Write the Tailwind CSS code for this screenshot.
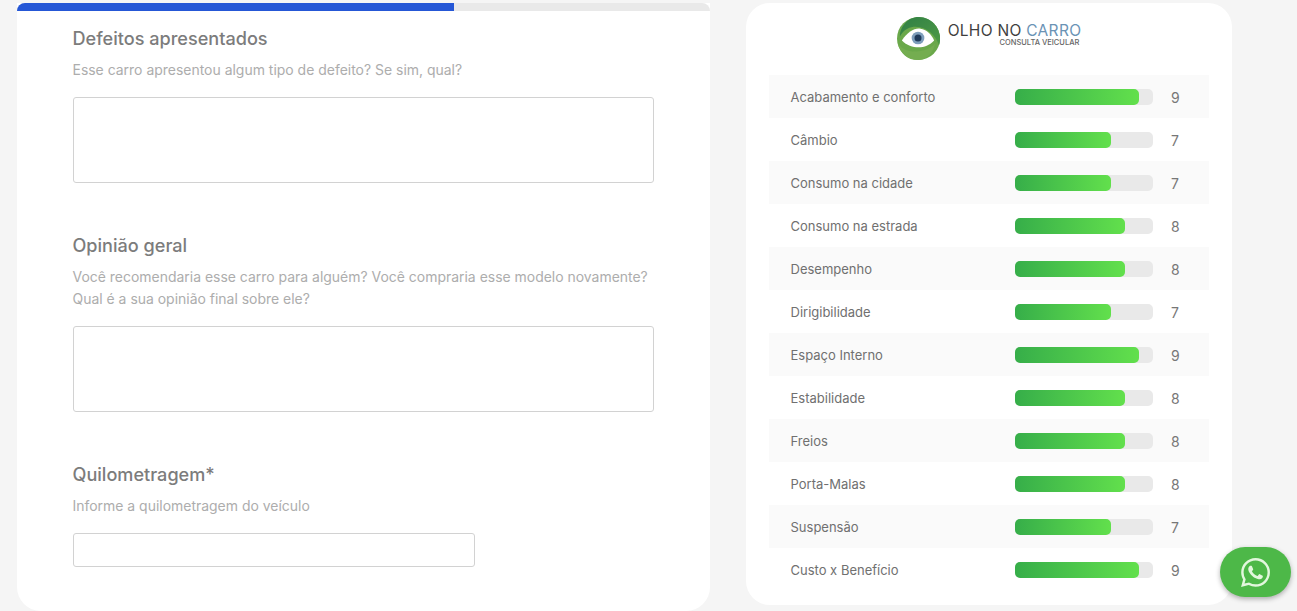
<!DOCTYPE html>
<html lang="pt-BR">
<head>
    <meta charset="UTF-8">
    <title>Olho no Carro</title>
    <script src="https://cdn.jsdelivr.net/npm/@tailwindcss/browser@4"></script>
</head>
<body class="bg-[#f5f5f5] h-[611px] overflow-hidden font-['Inter',sans-serif]">
    <div class="flex items-start pl-[17px] pt-[3px] gap-[36px]">
        <!-- Form -->
        <main class="w-[693px] h-[608px] bg-white rounded-b-[24px] shrink-0">
            <div class="h-[8px] bg-[#e9e9e9] rounded-t-[10px] overflow-hidden">
                <div class="h-full w-[437px] bg-[#2557d6]"></div>
            </div>
            <div class="pl-[55.500px] pr-[56px]">
                <section class="pt-[15px]">
                    <h2 class="text-[18.100px] leading-[24px] font-medium text-[#7c7c7c]">Defeitos apresentados</h2>
                    <p class="mt-[9px] text-[13.960px] leading-[22px] text-[#adadad]">Esse carro apresentou algum tipo de defeito? Se sim, qual?</p>
                    <textarea class="block mt-[16px] ml-[0.500px] w-[581px] h-[86px] border border-[#d2d2d2] rounded-[3px] resize-none"></textarea>
                </section>
                <section class="pt-[50px]">
                    <h2 class="text-[18.100px] leading-[24px] font-medium text-[#7c7c7c]">Opinião geral</h2>
                    <p class="mt-[9px] text-[13.960px] leading-[22px] text-[#adadad]">Você recomendaria esse carro para alguém? Você compraria esse modelo novamente?<br>Qual é a sua opinião final sobre ele?</p>
                    <textarea class="block mt-[16px] ml-[0.500px] w-[581px] h-[86px] border border-[#d2d2d2] rounded-[3px] resize-none"></textarea>
                </section>
                <section class="pt-[50px]">
                    <h2 class="text-[18.100px] leading-[24px] font-medium text-[#7c7c7c]">Quilometragem*</h2>
                    <p class="mt-[9px] text-[13.960px] leading-[22px] text-[#adadad]">Informe a quilometragem do veículo</p>
                    <input type="text" class="block mt-[16px] ml-[0.500px] w-[402px] h-[34px] border border-[#d2d2d2] rounded-[3px]">
                </section>
            </div>
        </main>

        <!-- Notas -->
        <aside class="w-[486px] h-[602px] bg-white rounded-[24px] px-[23px] shrink-0">
            <div class="h-[72px] flex items-start justify-center pt-[14px]">
                <svg class="w-[43px] h-[43px] mr-[8px]" viewBox="0 0 44 44">
                    <defs>
                        <linearGradient id="ringTop" x1="0" y1="0" x2="1" y2="1">
                            <stop offset="0" stop-color="#2f7f45"/>
                            <stop offset="1" stop-color="#4f9a45"/>
                        </linearGradient>
                    </defs>
                    <circle cx="22" cy="22" r="22" fill="#6aa84a"/>
                    <path d="M22 0a22 22 0 0 1 21 29C40 19 30 9 17 10 11 11 6 14 3 20 3 9 12 0 22 0z" fill="url(#ringTop)"/>
                    <path d="M1 27c5 7 13 9 21 8 8-1 14-4 17-8-2 10-9 17-18 17C11 44 3 37 1 27z" fill="#74ad50"/>
                    <path d="M5 24C11 15 18 11 24 12c6 1 11 5 14 12-5 5-10 7-16 7S10 29 5 24z" fill="#ffffff"/>
                    <circle cx="21.500" cy="21.500" r="6.500" fill="#7d9dbb"/>
                    <circle cx="21.500" cy="21.500" r="3.600" fill="#1f3a5a"/>
                </svg>
                <div class="pt-[7px]">
                    <div class="text-[15.500px] leading-[14px] tracking-[0.3px] text-[#3f3f3f] whitespace-nowrap">OLHO NO <span class="text-[#6b93b5]">CARRO</span></div>
                    <div class="mt-[0.500px] text-[7.500px] leading-[8px] font-medium text-[#666666] text-right pr-[2px] whitespace-nowrap">CONSULTA VEICULAR</div>
                </div>
            </div>

            <div class="flex items-center h-[43px] pt-[1px] bg-[#fafafa]">
                <span class="w-[246px] pl-[21.500px] pt-[2px] text-[13px] text-[#707070]">Acabamento e conforto</span>
                <div class="w-[138px] h-[16px] rounded-[5px] bg-[#e9e9e9]"><div class="h-full w-[124px] rounded-[5px] bg-gradient-to-r from-[#36ae49] to-[#62e04c]"></div></div>
                <span class="ml-[18px] text-[14px] text-[#777777]">9</span>
            </div>
            <div class="flex items-center h-[43px] pt-[1px]">
                <span class="w-[246px] pl-[21.500px] pt-[2px] text-[13px] text-[#707070]">Câmbio</span>
                <div class="w-[138px] h-[16px] rounded-[5px] bg-[#e9e9e9]"><div class="h-full w-[96px] rounded-[5px] bg-gradient-to-r from-[#36ae49] to-[#62e04c]"></div></div>
                <span class="ml-[18px] text-[14px] text-[#777777]">7</span>
            </div>
            <div class="flex items-center h-[43px] pt-[1px] bg-[#fafafa]">
                <span class="w-[246px] pl-[21.500px] pt-[2px] text-[13px] text-[#707070]">Consumo na cidade</span>
                <div class="w-[138px] h-[16px] rounded-[5px] bg-[#e9e9e9]"><div class="h-full w-[96px] rounded-[5px] bg-gradient-to-r from-[#36ae49] to-[#62e04c]"></div></div>
                <span class="ml-[18px] text-[14px] text-[#777777]">7</span>
            </div>
            <div class="flex items-center h-[43px] pt-[1px]">
                <span class="w-[246px] pl-[21.500px] pt-[2px] text-[13px] text-[#707070]">Consumo na estrada</span>
                <div class="w-[138px] h-[16px] rounded-[5px] bg-[#e9e9e9]"><div class="h-full w-[110px] rounded-[5px] bg-gradient-to-r from-[#36ae49] to-[#62e04c]"></div></div>
                <span class="ml-[18px] text-[14px] text-[#777777]">8</span>
            </div>
            <div class="flex items-center h-[43px] pt-[1px] bg-[#fafafa]">
                <span class="w-[246px] pl-[21.500px] pt-[2px] text-[13px] text-[#707070]">Desempenho</span>
                <div class="w-[138px] h-[16px] rounded-[5px] bg-[#e9e9e9]"><div class="h-full w-[110px] rounded-[5px] bg-gradient-to-r from-[#36ae49] to-[#62e04c]"></div></div>
                <span class="ml-[18px] text-[14px] text-[#777777]">8</span>
            </div>
            <div class="flex items-center h-[43px] pt-[1px]">
                <span class="w-[246px] pl-[21.500px] pt-[2px] text-[13px] text-[#707070]">Dirigibilidade</span>
                <div class="w-[138px] h-[16px] rounded-[5px] bg-[#e9e9e9]"><div class="h-full w-[96px] rounded-[5px] bg-gradient-to-r from-[#36ae49] to-[#62e04c]"></div></div>
                <span class="ml-[18px] text-[14px] text-[#777777]">7</span>
            </div>
            <div class="flex items-center h-[43px] pt-[1px] bg-[#fafafa]">
                <span class="w-[246px] pl-[21.500px] pt-[2px] text-[13px] text-[#707070]">Espaço Interno</span>
                <div class="w-[138px] h-[16px] rounded-[5px] bg-[#e9e9e9]"><div class="h-full w-[124px] rounded-[5px] bg-gradient-to-r from-[#36ae49] to-[#62e04c]"></div></div>
                <span class="ml-[18px] text-[14px] text-[#777777]">9</span>
            </div>
            <div class="flex items-center h-[43px] pt-[1px]">
                <span class="w-[246px] pl-[21.500px] pt-[2px] text-[13px] text-[#707070]">Estabilidade</span>
                <div class="w-[138px] h-[16px] rounded-[5px] bg-[#e9e9e9]"><div class="h-full w-[110px] rounded-[5px] bg-gradient-to-r from-[#36ae49] to-[#62e04c]"></div></div>
                <span class="ml-[18px] text-[14px] text-[#777777]">8</span>
            </div>
            <div class="flex items-center h-[43px] pt-[1px] bg-[#fafafa]">
                <span class="w-[246px] pl-[21.500px] pt-[2px] text-[13px] text-[#707070]">Freios</span>
                <div class="w-[138px] h-[16px] rounded-[5px] bg-[#e9e9e9]"><div class="h-full w-[110px] rounded-[5px] bg-gradient-to-r from-[#36ae49] to-[#62e04c]"></div></div>
                <span class="ml-[18px] text-[14px] text-[#777777]">8</span>
            </div>
            <div class="flex items-center h-[43px] pt-[1px]">
                <span class="w-[246px] pl-[21.500px] pt-[2px] text-[13px] text-[#707070]">Porta-Malas</span>
                <div class="w-[138px] h-[16px] rounded-[5px] bg-[#e9e9e9]"><div class="h-full w-[110px] rounded-[5px] bg-gradient-to-r from-[#36ae49] to-[#62e04c]"></div></div>
                <span class="ml-[18px] text-[14px] text-[#777777]">8</span>
            </div>
            <div class="flex items-center h-[43px] pt-[1px] bg-[#fafafa]">
                <span class="w-[246px] pl-[21.500px] pt-[2px] text-[13px] text-[#707070]">Suspensão</span>
                <div class="w-[138px] h-[16px] rounded-[5px] bg-[#e9e9e9]"><div class="h-full w-[96px] rounded-[5px] bg-gradient-to-r from-[#36ae49] to-[#62e04c]"></div></div>
                <span class="ml-[18px] text-[14px] text-[#777777]">7</span>
            </div>
            <div class="flex items-center h-[43px] pt-[1px]">
                <span class="w-[246px] pl-[21.500px] pt-[2px] text-[13px] text-[#707070]">Custo x Benefício</span>
                <div class="w-[138px] h-[16px] rounded-[5px] bg-[#e9e9e9]"><div class="h-full w-[124px] rounded-[5px] bg-gradient-to-r from-[#36ae49] to-[#62e04c]"></div></div>
                <span class="ml-[18px] text-[14px] text-[#777777]">9</span>
            </div>
        </aside>
    </div>

    <!-- WhatsApp -->
    <a href="#" class="fixed left-[1220px] top-[547px] w-[71px] h-[50px] rounded-[25px] bg-[#4db848] shadow-[0_2px_5px_rgba(0,0,0,0.3)] flex items-center justify-center">
        <svg class="w-[29px] h-[29px]" viewBox="0 0 24 24" fill="#e2f7dd">
            <path d="M17.472 14.382c-.297-.149-1.758-.867-2.03-.967-.273-.099-.471-.148-.67.15-.197.297-.767.966-.94 1.164-.173.199-.347.223-.644.075-.297-.15-1.255-.463-2.39-1.475-.883-.788-1.48-1.761-1.653-2.059-.173-.297-.018-.458.13-.606.134-.133.298-.347.446-.52.149-.174.198-.298.298-.497.099-.198.05-.371-.025-.52-.075-.149-.669-1.612-.916-2.207-.242-.579-.487-.5-.669-.51-.173-.008-.371-.01-.57-.01-.198 0-.52.074-.792.372-.272.297-1.04 1.016-1.04 2.479 0 1.462 1.065 2.875 1.213 3.074.149.198 2.096 3.2 5.077 4.487.709.306 1.262.489 1.694.625.712.227 1.36.195 1.871.118.571-.085 1.758-.719 2.006-1.413.248-.694.248-1.289.173-1.413-.074-.124-.272-.198-.57-.347m-5.421 7.403h-.004a9.87 9.87 0 01-5.031-1.378l-.361-.214-3.741.982.998-3.648-.235-.374a9.86 9.86 0 01-1.51-5.26c.001-5.45 4.436-9.884 9.888-9.884 2.64 0 5.122 1.03 6.988 2.898a9.825 9.825 0 012.893 6.994c-.003 5.45-4.437 9.884-9.885 9.884m8.413-18.297A11.815 11.815 0 0012.05 0C5.495 0 .16 5.335.157 11.892c0 2.096.547 4.142 1.588 5.945L.057 24l6.305-1.654a11.882 11.882 0 005.683 1.448h.005c6.554 0 11.89-5.335 11.893-11.893a11.821 11.821 0 00-3.48-8.413z"/>
        </svg>
    </a>
</body>
</html>
